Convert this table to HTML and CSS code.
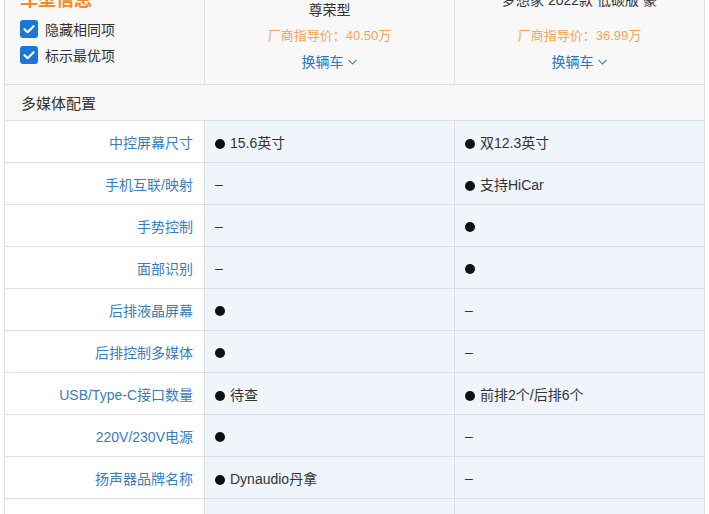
FILE: index.html
```html
<!DOCTYPE html>
<html lang="zh">
<head>
<meta charset="utf-8">
<link rel="stylesheet" href="styles.css">
</head>
<body>
<div class="page">
<table class="cmp">
  <colgroup><col class="c-label"><col class="c-car"><col class="c-car"></colgroup>
  <tr class="head">
    <td class="head-info">
      <div class="title">车型信息</div>
      <div class="chk first"><span class="box"><svg viewBox="0 0 18 18" width="18" height="18"><path d="M4.5 9.2 L7.6 12.2 L13.6 6.2" fill="none" stroke="#fff" stroke-width="2.2" stroke-linecap="round" stroke-linejoin="round"/></svg></span>隐藏相同项</div>
      <div class="chk"><span class="box"><svg viewBox="0 0 18 18" width="18" height="18"><path d="M4.5 9.2 L7.6 12.2 L13.6 6.2" fill="none" stroke="#fff" stroke-width="2.2" stroke-linecap="round" stroke-linejoin="round"/></svg></span>标示最优项</div>
    </td>
    <td class="head-car">
      <div class="name">腾势D9 2022款 DM-i 970 四驱<br>尊荣型</div>
      <div class="price">厂商指导价：40.50万</div>
      <div class="swap">换辆车<svg viewBox="0 0 12 8" width="11" height="8"><path d="M1.5 1.8 L6 6.2 L10.5 1.8" fill="none" stroke="#2f76b8" stroke-width="1.1"/></svg></div>
    </td>
    <td class="head-car">
      <div class="name">梦想家 2022款 低碳版 豪</div>
      <div class="price">厂商指导价：36.99万</div>
      <div class="swap">换辆车<svg viewBox="0 0 12 8" width="11" height="8"><path d="M1.5 1.8 L6 6.2 L10.5 1.8" fill="none" stroke="#2f76b8" stroke-width="1.1"/></svg></div>
    </td>
  </tr>
  <tr class="section"><td colspan="3">多媒体配置</td></tr>
  <tr><th>中控屏幕尺寸</th><td><i class="dot"></i>15.6英寸</td><td><i class="dot"></i>双12.3英寸</td></tr>
  <tr><th>手机互联/映射</th><td>–</td><td><i class="dot"></i>支持HiCar</td></tr>
  <tr><th>手势控制</th><td>–</td><td><i class="dot"></i></td></tr>
  <tr><th>面部识别</th><td>–</td><td><i class="dot"></i></td></tr>
  <tr><th>后排液晶屏幕</th><td><i class="dot"></i></td><td>–</td></tr>
  <tr><th>后排控制多媒体</th><td><i class="dot"></i></td><td>–</td></tr>
  <tr><th>USB/Type-C接口数量</th><td><i class="dot"></i>待查</td><td><i class="dot"></i>前排2个/后排6个</td></tr>
  <tr><th>220V/230V电源</th><td><i class="dot"></i></td><td>–</td></tr>
  <tr><th>扬声器品牌名称</th><td><i class="dot"></i>Dynaudio丹拿</td><td>–</td></tr>
  <tr><th>扬声器数量</th><td><i class="dot"></i>12喇叭</td><td><i class="dot"></i>12喇叭</td></tr>
</table>
</div>
</body>
</html>
```
FILE: styles.css
```css
html, body {
  margin: 0;
  padding: 0;
  background: #fff;
}
body {
  font-family: "Liberation Sans", "Noto Sans CJK SC", sans-serif;
  color: #333;
  overflow: hidden;
  height: 514px;
}
.page {
  padding-left: 4px;
  margin-top: -30px;
}
.cmp {
  border-collapse: collapse;
  table-layout: fixed;
  width: 701px;
}
.c-label { width: 200px; }
.c-car { width: 250px; }
.cmp td, .cmp th {
  border: 1px solid #dcdfe4;
  padding: 0;
}
.head td {
  background: #f8f8f8;
  height: 104px;
  vertical-align: top;
  padding-top: 9px;
}
.head-info {
  padding-left: 15px !important;
}
.title {
  margin-top: 8px;
  font-size: 18px;
  line-height: 24px;
  font-weight: 700;
  color: #f08a2c;
  height: 22px;
}
.chk {
  display: flex;
  align-items: center;
  height: 26px;
  font-size: 14px;
  color: #333;
}
.chk.first { margin-top: 6px; }
.box {
  width: 18px;
  height: 18px;
  border-radius: 3px;
  background: #1a78d4;
  margin-right: 7px;
  display: flex;
}
.head-car {
  text-align: center;
}
.name {
  height: 40px;
  display: flex;
  align-items: center;
  justify-content: center;
  font-size: 14px;
  line-height: 20px;
  color: #333;
}
.price {
  margin-top: 6px;
  font-size: 13px;
  line-height: 20px;
  color: #f2a55a;
}
.swap {
  margin-top: 6px;
  font-size: 14px;
  line-height: 20px;
  color: #2f76b8;
  display: flex;
  align-items: center;
  justify-content: center;
  gap: 3px;
}
.section td {
  height: 35px;
  background: #f7f7f7;
  font-size: 15px;
  color: #333;
  padding-left: 16px;
}
.cmp th {
  height: 41px;
  background: #fff;
  font-weight: 400;
  font-size: 14px;
  color: #3a7db8;
  text-align: right;
  padding-right: 11px;
}
.cmp tr:not(.head):not(.section) td {
  height: 41px;
  background: #f0f5fc;
  font-size: 14px;
  color: #333;
  padding-left: 10px;
}
.dot {
  display: inline-block;
  width: 10px;
  height: 10px;
  border-radius: 50%;
  background: #111;
  margin-right: 5px;
  vertical-align: -1px;
}
```
